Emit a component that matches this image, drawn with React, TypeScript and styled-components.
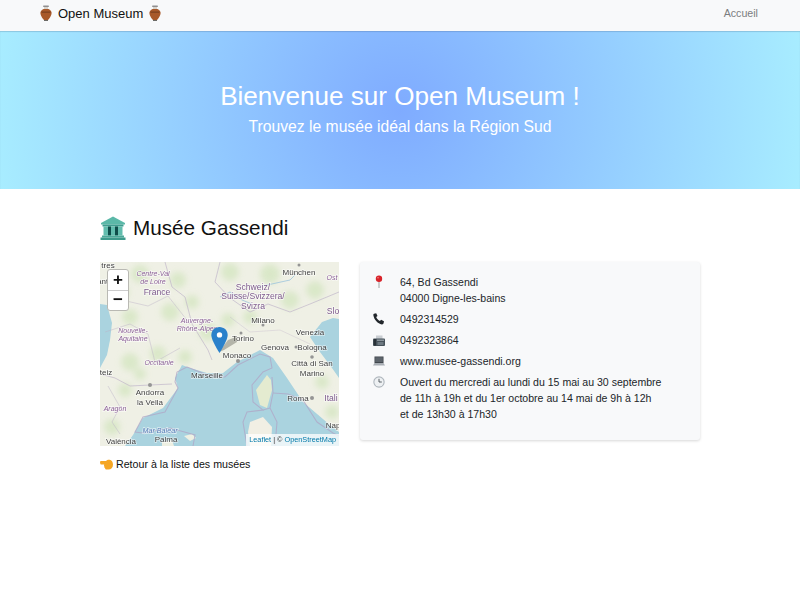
import styled, { createGlobalStyle } from "styled-components";

const GlobalStyle = createGlobalStyle`
  html, body { margin: 0; padding: 0; background: #fff; }
  body {
    font-family: "Liberation Sans", Arial, sans-serif;
    font-size: 10.55px;
    color: #212529;
  }
`;

const Navbar = styled.nav`
  height: 31px;
  box-sizing: border-box;
  background: #f8f9fa;
  display: flex;
  align-items: center;
  justify-content: space-between;
  padding: 0 42px 5px 40px;
`;

const Brand = styled.div`
  display: flex;
  align-items: center;
  gap: 6px;
  font-size: 13px;
  color: #111;
`;

const NavLink = styled.a`
  font-size: 10.67px;
  color: #7b7d7f;
`;

const Hero = styled.header`
  height: 158px;
  background: radial-gradient(circle 410px at 50% 50%, #7fabff 0%, #a8edff 100%);
  box-shadow: inset 0 1px 1px rgba(60, 90, 130, 0.25);
  color: #fff;
  text-align: center;
  display: flex;
  flex-direction: column;
  padding-top: 49px;
  box-sizing: border-box;
`;

const HeroTitle = styled.h1`
  margin: 0;
  font-size: 26.1px;
  line-height: 32px;
  font-weight: 400;
`;

const HeroSub = styled.p`
  margin: 0;
  font-size: 15.7px;
  line-height: 29px;
`;

const Container = styled.main`
  width: 600px;
  margin: 0 auto;
  padding-top: 25px;
`;

const PageTitle = styled.h2`
  display: flex;
  align-items: center;
  gap: 7px;
  margin: 0 0 20px;
  height: 28px;
  font-size: 20.7px;
  font-weight: 400;
  color: #111;
`;

const Columns = styled.div`
  display: grid;
  grid-template-columns: 239px 340px;
  column-gap: 21px;
  align-items: start;
`;

const MapColumn = styled.div`
  display: flex;
  flex-direction: column;
`;

const MapFrame = styled.div`
  position: relative;
  width: 239px;
  height: 184px;
  overflow: hidden;
  background: #eef0e4;
`;

const ZoomControl = styled.div`
  position: absolute;
  left: 7px;
  top: 7px;
  width: 20px;
  display: flex;
  flex-direction: column;
  background: #fff;
  border: 1px solid #b9b9b3;
  border-radius: 3px;
`;

const ZoomButton = styled.div<{ $last?: boolean }>`
  height: 19.5px;
  display: flex;
  align-items: center;
  justify-content: center;
  font-size: 17px;
  font-weight: 700;
  color: #111;
  border-bottom: ${(props) => (props.$last ? "none" : "1px solid #ccc")};
`;

const Attribution = styled.div`
  position: absolute;
  right: 0;
  bottom: 0;
  padding: 0 3px;
  line-height: 12px;
  font-size: 7.3px;
  color: #333;
  background: rgba(255, 255, 255, 0.75);
  span {
    color: #0078a8;
  }
`;

const Marker = styled.svg`
  position: absolute;
  left: 111px;
  top: 65px;
`;

const BackLink = styled.a`
  display: flex;
  align-items: center;
  gap: 3px;
  margin-top: 10px;
  line-height: 16px;
  font-size: 10.67px;
  color: #111;
`;

const Card = styled.section`
  box-sizing: border-box;
  height: 178px;
  padding: 12px 12px 0 13px;
  background: #f8f9fa;
  border-radius: 3px;
  box-shadow: 0 1px 3px rgba(0, 0, 0, 0.16);
`;

const InfoRow = styled.div`
  display: grid;
  grid-template-columns: 27px 1fr;
  margin-bottom: 5px;
  line-height: 16px;
  color: #212529;
`;

const IconCell = styled.div`
  height: 16px;
  display: flex;
  align-items: center;
`;

function Amphora() {
  return (
    <svg width="12" height="16" viewBox="0 0 12 16">
      <rect x="3" y="0.5" width="6" height="1.6" rx="0.8" fill="#8f8f8f" />
      <path d="M4 2h4v2H4z" fill="#d9d4cc" />
      <path d="M3.500 4h5C11 5 12 7 11.500 9c-.4 2-2 4.500-3.500 6H4C2.500 13.500.9 11 .5 9 0 7 1 5 3.500 4z" fill="#a8592a" />
      <path d="M1.500 6.500h9v1.300h-9z" fill="#7d4220" />
      <path d="M4 15h4v1H4z" fill="#6b6b66" />
    </svg>
  );
}

function Museum() {
  return (
    <svg width="26" height="24" viewBox="0 0 26 24">
      <path d="M13 0.5 25 7v1.500H1V7z" fill="#5bb8a8" />
      <rect x="2.500" y="8.500" width="21" height="2" fill="#3f9d90" />
      <rect x="3.500" y="10.500" width="19" height="9" fill="#62bdae" />
      <rect x="8" y="10.500" width="3" height="9" fill="#0f4d4a" />
      <rect x="15" y="10.500" width="3" height="9" fill="#0f4d4a" />
      <rect x="2" y="19.500" width="22" height="2" fill="#4ba999" />
      <rect x="0.500" y="21.500" width="25" height="2.500" fill="#3d9a8b" />
    </svg>
  );
}

function Pointing() {
  return (
    <svg width="13" height="11" viewBox="0 0 13 11">
      <path d="M0 3.200c0-.8.6-1.200 1.200-1.200H6c1-1 2.400-1.600 3.600-1.200C11.600 1.300 13 3 13 5.500 13 8.800 11 10.500 8.500 10.500H6.500C5.500 10.500 5 9.800 5 9 4.400 8.700 4.200 8 4.300 7.400 3.900 6.900 3.900 6.200 4.200 5.600H1.300C.5 5.600 0 4 0 3.200z" fill="#f5a623" />
    </svg>
  );
}

function Pin() {
  return (
    <svg width="12" height="14" viewBox="0 0 12 14">
      <rect x="5.400" y="5" width="1.200" height="8" fill="#b0b0b0" />
      <circle cx="6" cy="3.700" r="3.200" fill="#d8232a" />
      <circle cx="5" cy="2.700" r="0.800" fill="#f38b8b" />
    </svg>
  );
}

function Phone() {
  return (
    <svg width="12" height="12" viewBox="0 0 12 12">
      <path d="M1 .8 3.200.2l1.300 2.700-1.300 1c.6 1.700 1.900 3.200 3.700 4l1.200-1.100L11 8.200l-.5 2.400c-.2.600-1 1-1.700.8C4.800 10.500 1.200 6.800.4 2.400.3 1.700.5 1 1 .8z" fill="#22272b" />
    </svg>
  );
}

function Fax() {
  return (
    <svg width="12" height="11" viewBox="0 0 12 11">
      <rect x="3" y="0.500" width="6.500" height="4" fill="#c9ced2" />
      <rect x="0" y="3.500" width="12" height="7.500" rx="1" fill="#47525a" />
      <rect x="0.800" y="4" width="2.200" height="6.500" fill="#2a3238" />
      <rect x="4" y="4.500" width="7" height="1.500" fill="#8d979e" />
      <rect x="4.500" y="7" width="6" height="3" fill="#6e7a82" />
    </svg>
  );
}

function Laptop() {
  return (
    <svg width="12" height="10" viewBox="0 0 12 10">
      <rect x="1.500" y="0.500" width="9" height="6.500" fill="#3d4248" />
      <rect x="2.200" y="1.200" width="7.600" height="5" fill="#5d646b" />
      <path d="M1.500 7h9L12 9.500H0z" fill="#a9afb5" />
    </svg>
  );
}

function Clock() {
  return (
    <svg width="12" height="12" viewBox="0 0 12 12">
      <circle cx="6" cy="6" r="5.700" fill="#aeb6bc" />
      <circle cx="6" cy="6" r="4.600" fill="#eef1f3" />
      <path d="M6 2.800V6h2.800" stroke="#4a5257" strokeWidth="0.900" fill="none" />
    </svg>
  );
}

const labelFont = { fontFamily: "Liberation Sans, Arial, sans-serif" };

const tones = {
  city: { size: 8, color: "#3f3f3f", italic: false },
  region: { size: 7, color: "#8a5f96", italic: true },
  country: { size: 8.6, color: "#7d5a8c", italic: false },
  sea: { size: 7.2, color: "#5a7fb8", italic: true },
};

function Place({ x, y, children, tone = "city" }: { x: number; y: number; children: string; tone?: keyof typeof tones }) {
  const style = tones[tone];
  return (
    <text
      x={x}
      y={y}
      textAnchor="middle"
      fontSize={style.size}
      fontStyle={style.italic ? "italic" : "normal"}
      fill={style.color}
      stroke="#ffffff"
      strokeOpacity={0.6}
      strokeWidth={1.5}
      paintOrder="stroke"
      style={labelFont}
    >
      {children}
    </text>
  );
}

// small patches of forest, spread over the land
const patches = [
  [40, 12, 9], [78, 18, 8], [22, 30, 7], [70, 50, 9], [30, 55, 8], [92, 40, 7], [58, 92, 8], [30, 100, 9],
  [85, 95, 7], [25, 128, 7], [12, 165, 8], [40, 112, 6], [130, 10, 9], [170, 12, 10], [215, 28, 9],
  [150, 55, 7], [190, 38, 9], [108, 70, 9], [128, 58, 7], [222, 120, 7], [232, 150, 7], [165, 128, 5],
];

function TileMap() {
  return (
    <svg width="239" height="184" viewBox="0 0 239 184">
      <defs>
        <filter id="soft" x="-30%" y="-30%" width="160%" height="160%">
          <feGaussianBlur stdDeviation="3" />
        </filter>
        <filter id="edge">
          <feGaussianBlur stdDeviation="0.400" />
        </filter>
      </defs>
      <rect width="239" height="184" fill="#eff0e5" />
      {/* greens of the relief */}
      <g filter="url(#soft)" fill="#d3e5bf" opacity="0.75">
        {patches.map(([cx, cy, r]) => (
          <circle key={`${cx}-${cy}`} cx={cx} cy={cy} r={r} />
        ))}
      </g>
      {/* seas */}
      <g filter="url(#edge)">
        <path d="M0 42 7 43 12 61 10 78 7 93 0 106z" fill="#aad3df" />
        <path d="M25 184 33 173 43 156 63 146 78 126 75 116 82 103 90 106 107 111 123 111 137 100 160 88 173 96 187 116 203 140 230 163 239 170 239 184z" fill="#aad3df" />
        <path d="M210 75 222 60 233 56 239 57 239 116 232 106 220 90z" fill="#aad3df" />
        <path d="M167 113 171 118 172 128 167 146 160 143 156 128z" fill="#e4ebd0" />
        <path d="M150 160 163 155 172 165 171 184 150 184 148 170z" fill="#f1efe4" />
        <path d="M84 174 92 172 96 176 90 179z" fill="#eef0e3" />
        <path d="M62 180 72 178 74 184 62 184z" fill="#eef0e3" />
      </g>
      {/* maritime and land borders */}
      <g fill="none" stroke="#b0a6c6" strokeWidth="1.100" opacity="0.75">
        <path d="M87 105 110 114 125 115 138 103 160 92 170 95 172 106 163 110 152 123 153 140 163 148 147 150 143 160 147 184" />
        <path d="M172 115 173 131 170 146 177 160 175 184" />
        <path d="M173 131 188 132 203 138 217 160 233 171 239 174" />
        <path d="M163 148 170 146" />
        <path d="M87 105 77 110 75 120 78 126 65 150 43 155 35 170 43 171 70 166 95 173 93 184" />
      </g>
      <g fill="none" stroke="#bdb1c8" strokeWidth="0.800" opacity="0.8">
        <path d="M0 112 15 116 30 124 50 123 72 122" />
        <path d="M65 0 72 25 85 35 92 62 100 75 108 88 112 98" />
        <path d="M120 0 115 20 130 36 150 50 168 42 190 50 210 42 239 30" />
        <path d="M22 38 48 44 68 34 90 62" opacity="0.7" />
        <path d="M5 70 30 62 48 72 55 100 80 86" opacity="0.7" />
        <path d="M8 124 20 145 12 160 20 172" opacity="0.7" />
        <path d="M130 55 150 70 180 68 210 82" opacity="0.5" />
      </g>
      <g fill="none" stroke="#9cc4dc" strokeWidth="0.800">
        <path d="M120 35 130 30 142 38 152 42" />
        <path d="M158 25 190 18 196 12" />
      </g>
      <g fill="#959595">
        <circle cx="138" cy="99" r="2" />
        <circle cx="50" cy="123" r="2" />
        <circle cx="141" cy="71" r="1.500" />
        <circle cx="163" cy="63" r="1.500" />
        <circle cx="196" cy="85" r="1.500" />
        <circle cx="212" cy="136" r="2" />
        <circle cx="212" cy="95" r="1.800" />
        <circle cx="199" cy="3" r="1.500" />
      </g>
      <Place x={8} y={5.500}>tres</Place>
      <Place x={4} y={22}>Nantes</Place>
      <Place x={199} y={13}>München</Place>
      <Place x={232} y={18} tone="region">Ost</Place>
      <Place x={53} y={14} tone="region">Centre-Val</Place>
      <Place x={53} y={22} tone="region">de Loire</Place>
      <Place x={57} y={33} tone="country">France</Place>
      <Place x={153} y={28} tone="country">Schweiz/</Place>
      <Place x={153} y={37} tone="country">Suisse/Svizzera/</Place>
      <Place x={153} y={47} tone="country">Svizra</Place>
      <Place x={163} y={61}>Milano</Place>
      <Place x={233} y={52} tone="country">Slo</Place>
      <Place x={97} y={61} tone="region">Auvergne-</Place>
      <Place x={97} y={69} tone="region">Rhône-Alpes</Place>
      <Place x={33} y={71} tone="region">Nouvelle-</Place>
      <Place x={33} y={79} tone="region">Aquitaine</Place>
      <Place x={143} y={79}>Torino</Place>
      <Place x={175} y={88}>Genova</Place>
      <Place x={212} y={88}>Bologna</Place>
      <Place x={210} y={73}>Venezia</Place>
      <Place x={137} y={96}>Monaco</Place>
      <Place x={59} y={103} tone="region">Occitanie</Place>
      <Place x={107} y={116}>Marseille</Place>
      <Place x={212} y={104}>Città di San</Place>
      <Place x={212} y={114}>Marino</Place>
      <Place x={6} y={113}>teiz</Place>
      <Place x={50} y={133}>Andorra</Place>
      <Place x={50} y={143}>la Vella</Place>
      <Place x={15} y={149} tone="region">Aragón</Place>
      <Place x={198} y={139}>Roma</Place>
      <Place x={231} y={139} tone="country">Itali</Place>
      <Place x={233} y={166}>Nap</Place>
      <Place x={60} y={171} tone="sea">Mar Balear</Place>
      <Place x={66} y={180}>Palma</Place>
      <Place x={21} y={182}>València</Place>
      {/* marker shadow */}
      <path d="M119 90 128 78 136 75 137 80 124 88z" fill="#6b6b5f" opacity="0.45" filter="url(#edge)" />
    </svg>
  );
}

export default function App() {
  return (
    <>
      <GlobalStyle />
      <Navbar>
        <Brand>
          <Amphora />
          <span>Open Museum</span>
          <Amphora />
        </Brand>
        <NavLink>Accueil</NavLink>
      </Navbar>
      <Hero>
        <HeroTitle>Bienvenue sur Open Museum !</HeroTitle>
        <HeroSub>Trouvez le musée idéal dans la Région Sud</HeroSub>
      </Hero>
      <Container>
        <PageTitle>
          <Museum />
          <span>Musée Gassendi</span>
        </PageTitle>
        <Columns>
          <MapColumn>
            <MapFrame>
              <TileMap />
              <ZoomControl>
                <ZoomButton>+</ZoomButton>
                <ZoomButton $last>−</ZoomButton>
              </ZoomControl>
              <Marker width="17" height="26" viewBox="0 0 17 27">
                <path d="M8.500 0C3.800 0 0 3.700 0 8.300 0 14 8.500 27 8.500 27S17 14 17 8.300C17 3.700 13.200 0 8.500 0z" fill="#2a81cb" />
                <circle cx="8.500" cy="8.200" r="2.800" fill="#fff" />
              </Marker>
              <Attribution>
                <span>Leaflet</span> | © <span>OpenStreetMap</span>
              </Attribution>
            </MapFrame>
            <BackLink>
              <Pointing />
              Retour à la liste des musées
            </BackLink>
          </MapColumn>
          <Card>
            <InfoRow>
              <IconCell><Pin /></IconCell>
              <div>
                64, Bd Gassendi
                <br />
                04000 Digne-les-bains
              </div>
            </InfoRow>
            <InfoRow>
              <IconCell><Phone /></IconCell>
              <div>0492314529</div>
            </InfoRow>
            <InfoRow>
              <IconCell><Fax /></IconCell>
              <div>0492323864</div>
            </InfoRow>
            <InfoRow>
              <IconCell><Laptop /></IconCell>
              <div>www.musee-gassendi.org</div>
            </InfoRow>
            <InfoRow>
              <IconCell><Clock /></IconCell>
              <div>
                Ouvert du mercredi au lundi du 15 mai au 30 septembre
                <br />
                de 11h à 19h et du 1er octobre au 14 mai de 9h à 12h
                <br />
                et de 13h30 à 17h30
              </div>
            </InfoRow>
          </Card>
        </Columns>
      </Container>
    </>
  );
}
